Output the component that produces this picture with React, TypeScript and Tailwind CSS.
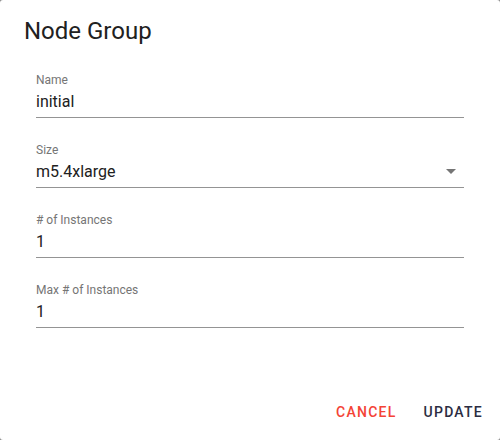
import React from "react";

function Field({ label, value, select }: { label: string; value: string; select?: boolean }) {
  return (
    <div className="flex flex-col">
      <div className="text-[12px] leading-[14px] text-[#757575]">{label}</div>
      <div className="mt-[5px] flex items-center justify-between border-b border-[#949494] pb-[6px]">
        <span className="text-[16px] leading-[19px] text-[#212121]">{value}</span>
        {select && (
          <svg width="10" height="5" viewBox="0 0 10 5" className="mr-[8px]">
            <path d="M0 0 L10 0 L5 5 Z" fill="#757575" />
          </svg>
        )}
      </div>
    </div>
  );
}

export default function App() {
  return (
    <div className="w-[500px] h-[440px] bg-[#8a8a8a]" style={{ fontFamily: "Roboto, 'Liberation Sans', sans-serif" }}>
      <div className="w-[500px] h-[440px] bg-white rounded-[3px] flex flex-col">
        <div className="pl-[24px] pt-[16px] text-[24px] leading-[30px] text-[#212121]">Node Group</div>
        <div className="ml-[36px] w-[428px] mt-[27px] flex flex-col gap-[25px]">
          <Field label="Name" value="initial" />
          <Field label="Size" value="m5.4xlarge" select />
          <Field label="# of Instances" value="1" />
          <Field label="Max # of Instances" value="1" />
        </div>
        <div className="mt-auto mb-[20px] flex justify-end items-center gap-[27px] pr-[17px]">
          <span className="text-[14px] leading-[16px] font-medium tracking-[1.25px] text-[#f44336]">CANCEL</span>
          <span className="text-[14px] leading-[16px] font-medium tracking-[1.25px] text-[#2b2d42]">UPDATE</span>
        </div>
      </div>
    </div>
  );
}
